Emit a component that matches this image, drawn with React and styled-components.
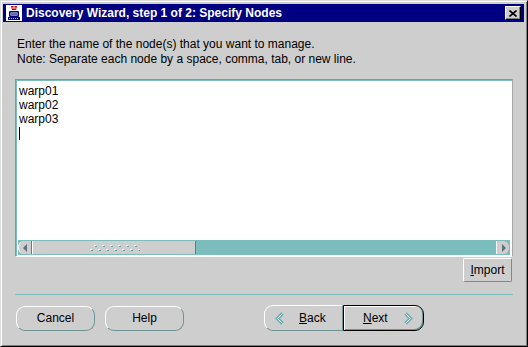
import React from 'react';
import styled, { createGlobalStyle, css } from 'styled-components';

const GlobalStyle = createGlobalStyle`
	html, body {
		margin: 0;
		padding: 0;
		background: #cecece;
	}
	body {
		font-family: "Liberation Sans", Arial, sans-serif;
		font-size: 12px;
		color: #000;
	}
`;

const Window = styled.div`
	width: 528px;
	height: 347px;
	box-sizing: border-box;
	background: #cecece;
	border-top: 1px solid #dcdcdc;
	border-left: 1px solid #dcdcdc;
	border-right: 1px solid #000;
	border-bottom: 1px solid #000;
	box-shadow: inset 1px 1px 0 #fff, inset -1px -1px 0 #808080;
	padding: 3px 3px 0 2px;
	display: flex;
	flex-direction: column;
`;

const TitleBar = styled.div`
	height: 18px;
	background: #000080;
	display: flex;
	align-items: center;
	padding: 0 3px 0 3px;
	gap: 4px;
`;

const Title = styled.div`
	flex: 1;
	color: #fff;
	font-weight: bold;
	font-size: 12px;
	white-space: nowrap;
`;

const CloseButton = styled.div`
	width: 16px;
	height: 14px;
	box-sizing: border-box;
	background: #cecece;
	border-top: 1px solid #fff;
	border-left: 1px solid #fff;
	border-right: 1px solid #000;
	border-bottom: 1px solid #000;
	box-shadow: inset -1px -1px 0 #808080;
	display: flex;
	align-items: center;
	justify-content: center;
`;

const Body = styled.div`
	flex: 1;
	display: flex;
	flex-direction: column;
	padding: 15px 11px 0 12px;
`;

const Instructions = styled.div`
	padding-left: 2px;
	line-height: 15px;
`;

const TextBox = styled.div`
	margin-top: 12px;
	height: 178px;
	box-sizing: border-box;
	background: #fff;
	border-top: 1px solid #6f9f9f;
	border-left: 1px solid #6f9f9f;
	border-right: 1px solid #a8a8a8;
	border-bottom: 1px solid #fff;
	box-shadow: inset 1px 1px 0 #7bbdbd;
	display: flex;
	flex-direction: column;
	padding: 1px;
`;

const Lines = styled.div`
	flex: 1;
	padding: 3px 0 0 2px;
	line-height: 14px;
	font-size: 12px;
`;

const Caret = styled.div`
	width: 1px;
	height: 13px;
	background: #000;
	margin-top: 1px;
`;

const ScrollBar = styled.div`
	height: 14px;
	display: flex;
	margin: 0 1px;
	border-top: 1px solid #7bbdbd;
	background: #7bbdbd;
`;

const ArrowButton = styled.div`
	width: 14px;
	height: 13px;
	box-sizing: border-box;
	background: #cecece;
	display: flex;
	align-items: center;
	justify-content: center;
	border-left: 1px solid #fff;
	${({ side }) =>
		side === 'left'
			? css`
					border-radius: 6px 0 0 6px;
					border-right: 1px solid #6a7a7a;
			  `
			: css`
					border-radius: 0 6px 6px 0;
					border-right: 1px solid #9ab;
			  `}
`;

const Thumb = styled.div`
	width: 164px;
	height: 13px;
	box-sizing: border-box;
	background: #cecece;
	border-left: 1px solid #fff;
	border-right: 1px solid #6a7a7a;
	display: flex;
	align-items: center;
	justify-content: center;
`;

const Track = styled.div`
	flex: 1;
`;

const ImportRow = styled.div`
	display: flex;
	justify-content: flex-end;
	margin-top: 1px;
`;

const FlatButton = styled.div`
	width: 49px;
	height: 24px;
	box-sizing: border-box;
	border-top: 1px solid #fff;
	border-left: 1px solid #fff;
	border-right: 1px solid #6f9090;
	border-bottom: 1px solid #6f9090;
	border-radius: 2px;
	display: flex;
	align-items: center;
	justify-content: center;
	margin-right: 1px;
`;

const Separator = styled.div`
	margin-top: 12px;
	height: 1px;
	background: #7bbdbd;
`;

const ButtonRow = styled.div`
	margin-top: 10px;
	display: flex;
	align-items: center;
	padding-left: 1px;
`;

const PillButton = styled.div`
	width: 79px;
	height: 25px;
	box-sizing: border-box;
	border-top: 1px solid #fff;
	border-left: 1px solid #fff;
	border-right: 1px solid #6f9494;
	border-bottom: 1px solid #6f9494;
	border-radius: 9px;
	display: flex;
	align-items: center;
	justify-content: center;
	& + & {
		margin-left: 10px;
	}
`;

const NavGroup = styled.div`
	display: flex;
	margin-left: 80px;
`;

const NavButton = styled.div`
	height: 26px;
	box-sizing: border-box;
	display: flex;
	align-items: center;
	${({ side }) =>
		side === 'left'
			? css`
					width: 79px;
					border-top: 1px solid #fff;
					border-left: 1px solid #fff;
					border-right: 1px solid #6f9494;
					border-bottom: 1px solid #6f9494;
					border-radius: 9px 0 0 9px;
					padding-left: 10px;
					gap: 14px;
			  `
			: css`
					width: 81px;
					border: 1px solid #000;
					border-radius: 0 9px 9px 0;
					box-shadow: inset 1px 1px 0 #fff, inset -1px -1px 0 #6f9494;
					padding-left: 19px;
					gap: 15px;
			  `}
`;

const Mnemonic = styled.span`
	text-decoration: underline;
`;

function WizardIcon() {
	return (
		<svg width="16" height="16" viewBox="0 0 16 16">
			<rect x="0" y="0" width="16" height="16" fill="#fff" />
			<path d="M5 1 L11 1 L10 5 L6 5 Z" fill="#d00000" />
			<path d="M7 2 h2 M6 3 h4" stroke="#fff" strokeWidth="0.8" />
			<rect x="3" y="6" width="10" height="6" rx="1" fill="#000080" />
			<rect x="4.5" y="7.5" width="7" height="3" fill="#fff" />
			<path d="M5 8.5 h6 M5 9.5 h6" stroke="#000080" strokeWidth="0.6" />
			<rect x="2" y="12" width="12" height="3" fill="#000080" />
			<path d="M3 13.5 h10" stroke="#fff" strokeWidth="0.8" strokeDasharray="1 1" />
		</svg>
	);
}

function CloseGlyph() {
	return (
		<svg width="8" height="7" viewBox="0 0 8 7">
			<path d="M0.5 0.5 L7.5 6.5 M7.5 0.5 L0.5 6.5" stroke="#000" strokeWidth="1.6" />
		</svg>
	);
}

function SmallArrow({ dir }) {
	return (
		<svg width="5" height="8" viewBox="0 0 5 8">
			{dir === 'left' ? <path d="M4 0 L0 4 L4 8 Z" fill="#5f7070" /> : <path d="M1 0 L5 4 L1 8 Z" fill="#5f7070" />}
		</svg>
	);
}

function Grip() {
	const top = [93, 101, 109, 117, 125, 133];
	const bottom = [89, 97, 105, 113, 121, 129, 137];
	return (
		<svg width="52" height="8" viewBox="0 0 52 8" shapeRendering="crispEdges">
			{top.map((x) => (
				<g key={'t' + x}>
					<rect x={x - 87} y="1" width="2" height="1" fill="#fff" />
					<rect x={x - 86} y="2" width="2" height="1" fill="#5fa0a0" />
				</g>
			))}
			{bottom.map((x) => (
				<g key={'b' + x}>
					<rect x={x - 87} y="5" width="2" height="1" fill="#fff" />
					<rect x={x - 86} y="6" width="2" height="1" fill="#5fa0a0" />
				</g>
			))}
		</svg>
	);
}

function Chevron({ dir }) {
	const d = dir === 'left' ? 'M7.5 1.5 L2.5 6.5 L7.5 11.5' : 'M2.5 1.5 L7.5 6.5 L2.5 11.5';
	return (
		<svg width="10" height="13" viewBox="0 0 10 13">
			<path d={d} stroke="#6fb0b0" strokeWidth="3.6" fill="none" />
			<path d={d} stroke="#e6f4f4" strokeWidth="1" fill="none" />
		</svg>
	);
}

function App() {
	return (
		<>
			<GlobalStyle />
			<Window>
				<TitleBar>
					<WizardIcon />
					<Title>Discovery Wizard, step 1 of 2: Specify Nodes</Title>
					<CloseButton>
						<CloseGlyph />
					</CloseButton>
				</TitleBar>
				<Body>
					<Instructions>
						<div>Enter the name of the node(s) that you want to manage.</div>
						<div>Note: Separate each node by a space, comma, tab, or new line.</div>
					</Instructions>
					<TextBox>
						<Lines>
							<div>warp01</div>
							<div>warp02</div>
							<div>warp03</div>
							<Caret />
						</Lines>
						<ScrollBar>
							<ArrowButton side="left">
								<SmallArrow dir="left" />
							</ArrowButton>
							<Thumb>
								<Grip />
							</Thumb>
							<Track />
							<ArrowButton side="right">
								<SmallArrow dir="right" />
							</ArrowButton>
						</ScrollBar>
					</TextBox>
					<ImportRow>
						<FlatButton>
							<span>
								<Mnemonic>I</Mnemonic>mport
							</span>
						</FlatButton>
					</ImportRow>
					<Separator />
					<ButtonRow>
						<PillButton>Cancel</PillButton>
						<PillButton>Help</PillButton>
						<NavGroup>
							<NavButton side="left">
								<Chevron dir="left" />
								<span>
									<Mnemonic>B</Mnemonic>ack
								</span>
							</NavButton>
							<NavButton side="right">
								<span>
									<Mnemonic>N</Mnemonic>ext
								</span>
								<Chevron dir="right" />
							</NavButton>
						</NavGroup>
					</ButtonRow>
				</Body>
			</Window>
		</>
	);
}

export default App;
